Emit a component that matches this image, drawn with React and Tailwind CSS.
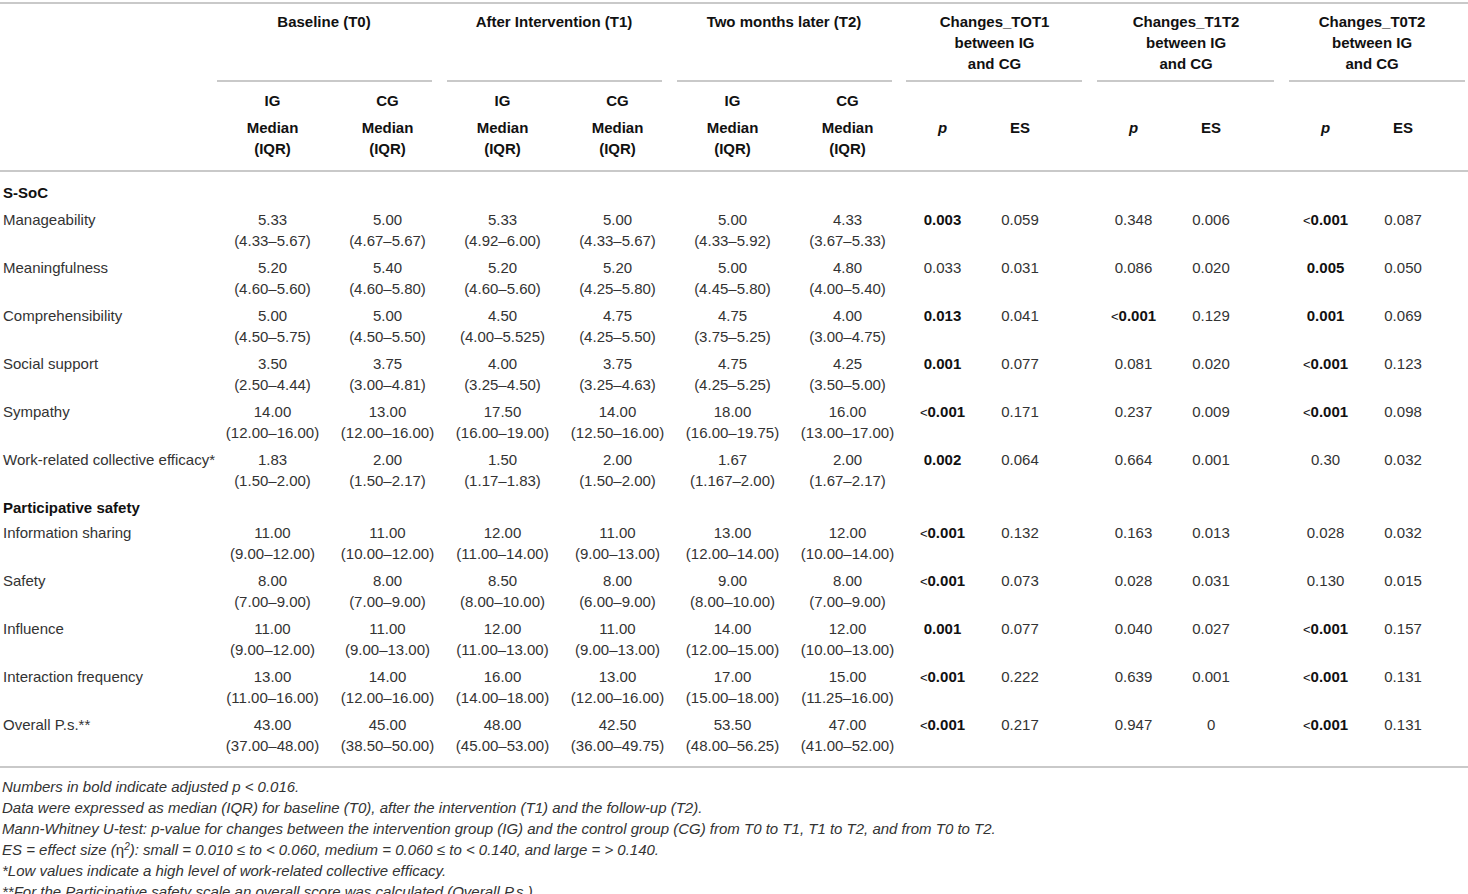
import React from 'react';

// [label, [6 median cells], [p1, es1, p2, es2, p3, es3]]  p values prefixed with "!" are bold
const sections = [
  {
    title: 'S-SoC',
    first: true,
    rows: [
      ['Manageability', ['5.33|(4.33–5.67)', '5.00|(4.67–5.67)', '5.33|(4.92–6.00)', '5.00|(4.33–5.67)', '5.00|(4.33–5.92)', '4.33|(3.67–5.33)'], ['!0.003', '0.059', '0.348', '0.006', '!<0.001', '0.087']],
      ['Meaningfulness', ['5.20|(4.60–5.60)', '5.40|(4.60–5.80)', '5.20|(4.60–5.60)', '5.20|(4.25–5.80)', '5.00|(4.45–5.80)', '4.80|(4.00–5.40)'], ['0.033', '0.031', '0.086', '0.020', '!0.005', '0.050']],
      ['Comprehensibility', ['5.00|(4.50–5.75)', '5.00|(4.50–5.50)', '4.50|(4.00–5.525)', '4.75|(4.25–5.50)', '4.75|(3.75–5.25)', '4.00|(3.00–4.75)'], ['!0.013', '0.041', '!<0.001', '0.129', '!0.001', '0.069']],
      ['Social support', ['3.50|(2.50–4.44)', '3.75|(3.00–4.81)', '4.00|(3.25–4.50)', '3.75|(3.25–4.63)', '4.75|(4.25–5.25)', '4.25|(3.50–5.00)'], ['!0.001', '0.077', '0.081', '0.020', '!<0.001', '0.123']],
      ['Sympathy', ['14.00|(12.00–16.00)', '13.00|(12.00–16.00)', '17.50|(16.00–19.00)', '14.00|(12.50–16.00)', '18.00|(16.00–19.75)', '16.00|(13.00–17.00)'], ['!<0.001', '0.171', '0.237', '0.009', '!<0.001', '0.098']],
      ['Work-related collective efficacy*', ['1.83|(1.50–2.00)', '2.00|(1.50–2.17)', '1.50|(1.17–1.83)', '2.00|(1.50–2.00)', '1.67|(1.167–2.00)', '2.00|(1.67–2.17)'], ['!0.002', '0.064', '0.664', '0.001', '0.30', '0.032']],
    ],
  },
  {
    title: 'Participative safety',
    rows: [
      ['Information sharing', ['11.00|(9.00–12.00)', '11.00|(10.00–12.00)', '12.00|(11.00–14.00)', '11.00|(9.00–13.00)', '13.00|(12.00–14.00)', '12.00|(10.00–14.00)'], ['!<0.001', '0.132', '0.163', '0.013', '0.028', '0.032']],
      ['Safety', ['8.00|(7.00–9.00)', '8.00|(7.00–9.00)', '8.50|(8.00–10.00)', '8.00|(6.00–9.00)', '9.00|(8.00–10.00)', '8.00|(7.00–9.00)'], ['!<0.001', '0.073', '0.028', '0.031', '0.130', '0.015']],
      ['Influence', ['11.00|(9.00–12.00)', '11.00|(9.00–13.00)', '12.00|(11.00–13.00)', '11.00|(9.00–13.00)', '14.00|(12.00–15.00)', '12.00|(10.00–13.00)'], ['!0.001', '0.077', '0.040', '0.027', '!<0.001', '0.157']],
      ['Interaction frequency', ['13.00|(11.00–16.00)', '14.00|(12.00–16.00)', '16.00|(14.00–18.00)', '13.00|(12.00–16.00)', '17.00|(15.00–18.00)', '15.00|(11.25–16.00)'], ['!<0.001', '0.222', '0.639', '0.001', '!<0.001', '0.131']],
      ['Overall P.s.**', ['43.00|(37.00–48.00)', '45.00|(38.50–50.00)', '48.00|(45.00–53.00)', '42.50|(36.00–49.75)', '53.50|(48.00–56.25)', '47.00|(41.00–52.00)'], ['!<0.001', '0.217', '0.947', '0', '!<0.001', '0.131']],
    ],
  },
];

const PVal = ({ v }) => {
  if (!v.startsWith('!')) return <span>{v}</span>;
  const t = v.slice(1);
  if (t.startsWith('<'))
    return (
      <span className="font-bold text-[#111]">
        <span className="font-normal text-[13px]">&lt;</span>
        {t.slice(1)}
      </span>
    );
  return <span className="font-bold text-[#111]">{t}</span>;
};

const Line = ({ className }) => <div className={'h-[2px] bg-[#c9c9c9] ' + className} />;

const Row = ({ label, meds, stats, last }) => {
  const pad = last ? 'pt-[3px] pb-[10px]' : 'py-[3px]';
  return (
    <tr className="align-top">
      <td className={'pl-[3px] text-left whitespace-nowrap ' + pad}>{label}</td>
      {meds.map((m, i) => {
        const [a, b] = m.split('|');
        return (
          <td key={i} className={'text-center ' + pad}>
            <div>{a}</div>
            <div>{b}</div>
          </td>
        );
      })}
      {[0, 1, 2].map((g) => (
        <React.Fragment key={g}>
          <td className={'text-center ' + pad}>
            <PVal v={stats[g * 2]} />
          </td>
          <td className={'text-center ' + pad}>{stats[g * 2 + 1]}</td>
          <td className={pad} />
        </React.Fragment>
      ))}
    </tr>
  );
};

const groups = ['Baseline (T0)', 'After Intervention (T1)', 'Two months later (T2)'];
const changes = ['Changes_TOT1', 'Changes_T1T2', 'Changes_T0T2'];

export default function App() {
  return (
    <div className="w-[1468px] bg-white pt-[2px] font-['Liberation_Sans',Arial,sans-serif] text-[15px] leading-[21px] text-[#333]">
      <table className="w-[1468px] table-fixed border-collapse">
        <colgroup>
          <col className="w-[215px]" />
          <col className="w-[115px]" />
          <col className="w-[115px]" />
          <col className="w-[115px]" />
          <col className="w-[115px]" />
          <col className="w-[115px]" />
          <col className="w-[115px]" />
          <col className="w-[75px]" />
          <col className="w-[80px]" />
          <col className="w-[36px]" />
          <col className="w-[75px]" />
          <col className="w-[80px]" />
          <col className="w-[37px]" />
          <col className="w-[75px]" />
          <col className="w-[80px]" />
          <col className="w-[25px]" />
        </colgroup>
        <thead className="font-bold text-[#111]">
          <tr className="align-top border-t-2 border-[#c9c9c9]">
            <th className="pt-[7px] pb-[6px]" />
            {groups.map((g) => (
              <th key={g} colSpan={2} className="pt-[7px] pb-[6px] pr-[12px] text-center">
                {g}
              </th>
            ))}
            {changes.map((c) => (
              <th key={c} colSpan={3} className="pt-[7px] pb-[6px] pr-[12px] text-center">
                {c}
                <br />
                between IG
                <br />
                and CG
              </th>
            ))}
          </tr>
          <tr>
            <td />
            {groups.map((g) => (
              <td key={g} colSpan={2}>
                <Line className="ml-[2px] mr-[13px]" />
              </td>
            ))}
            {changes.map((c, i) => (
              <td key={c} colSpan={3}>
                <Line className={i === 2 ? 'ml-[1px] mr-[3px]' : 'ml-[1px] mr-[14px]'} />
              </td>
            ))}
          </tr>
          <tr className="border-b-2 border-[#c9c9c9]">
            <th className="pt-[8px] pb-[11px]" />
            {['IG', 'CG', 'IG', 'CG', 'IG', 'CG'].map((h, i) => (
              <th key={i} className="pt-[8px] pb-[11px] text-center align-top">
                <div className="mb-[6px]">{h}</div>
                <div>Median</div>
                <div>(IQR)</div>
              </th>
            ))}
            {[0, 1, 2].map((g) => (
              <React.Fragment key={g}>
                <th className="text-center italic align-middle pt-[14px] pb-[11px]">p</th>
                <th className="text-center align-middle pt-[14px] pb-[11px]">ES</th>
                <th />
              </React.Fragment>
            ))}
          </tr>
        </thead>
        <tbody className="border-b-2 border-[#c9c9c9]">
          {sections.map((s, si) => (
            <React.Fragment key={s.title}>
              <tr>
                <td
                  colSpan={16}
                  className={
                    'pl-[3px] font-bold text-[#111] ' + (s.first ? 'pt-[10px] pb-[3px]' : 'pt-[3px] pb-[1px]')
                  }
                >
                  {s.title}
                </td>
              </tr>
              {s.rows.map((r, ri) => (
                <Row
                  key={r[0]}
                  label={r[0]}
                  meds={r[1]}
                  stats={r[2]}
                  last={si === sections.length - 1 && ri === s.rows.length - 1}
                />
              ))}
            </React.Fragment>
          ))}
        </tbody>
      </table>
      <div className="pt-[8px] pl-[2px] italic">
        <p>Numbers in bold indicate adjusted p &lt; 0.016.</p>
        <p>Data were expressed as median (IQR) for baseline (T0), after the intervention (T1) and the follow-up (T2).</p>
        <p>
          Mann-Whitney U-test: p-value for changes between the intervention group (IG) and the control group (CG) from
          T0 to T1, T1 to T2, and from T0 to T2.
        </p>
        <p>
          ES = effect size (<span className="not-italic">η</span>
          <sup className="text-[10px]">2</sup>): small = 0.010 ≤ to &lt; 0.060, medium = 0.060 ≤ to &lt; 0.140, and
          large = &gt; 0.140.
        </p>
        <p>*Low values indicate a high level of work-related collective efficacy.</p>
        <p>**For the Participative safety scale an overall score was calculated (Overall P.s.).</p>
      </div>
    </div>
  );
}
